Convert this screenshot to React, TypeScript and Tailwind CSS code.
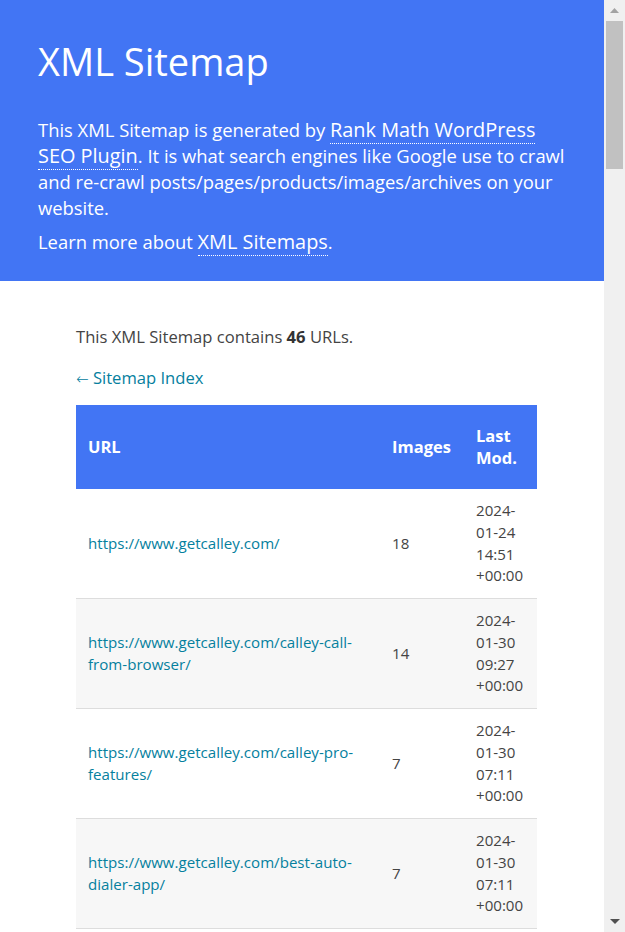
import React from 'react';

interface SitemapRow {
  loc: string;
  images: number;
  lastmod: string;
}

const rows: SitemapRow[] = [
  { loc: 'https://www.getcalley.com/', images: 18, lastmod: '2024-01-24 14:51 +00:00' },
  { loc: 'https://www.getcalley.com/calley-call-from-browser/', images: 14, lastmod: '2024-01-30 09:27 +00:00' },
  { loc: 'https://www.getcalley.com/calley-pro-features/', images: 7, lastmod: '2024-01-30 07:11 +00:00' },
  { loc: 'https://www.getcalley.com/best-auto-dialer-app/', images: 7, lastmod: '2024-01-30 07:11 +00:00' },
  { loc: 'https://www.getcalley.com/power-dialer/', images: 9, lastmod: '2024-01-30 07:11 +00:00' },
];

function Scrollbar() {
  return (
    <aside className="flex w-[21px] shrink-0 flex-col items-center bg-[#f0f0f0]">
      <div className="flex h-[21px] w-full items-center justify-center">
        <svg width="9" height="5" viewBox="0 0 9 5">
          <path d="M4.5 0L9 5H0z" fill="#a3a3a3" />
        </svg>
      </div>
      <div className="h-[148px] w-[17px] bg-[#c1c1c1]" />
      <div className="flex-1" />
      <div className="flex h-[21px] w-full items-center justify-center">
        <svg width="10" height="5" viewBox="0 0 10 5">
          <path d="M0 0H10L5 5z" fill="#505050" />
        </svg>
      </div>
    </aside>
  );
}

export default function App() {
  return (
    <div className="flex h-[932px] w-[625px] overflow-hidden bg-white font-['Open_Sans',sans-serif] text-[#444]">
      <main className="w-[604px] shrink-0 overflow-hidden">
        {/* description */}
        <header className="bg-[#4275f4] pt-[36px] pb-[26px] pl-[38px] pr-[33px] text-white">
          <h1 className="mb-[31px] text-[38px] font-normal leading-[50px]">XML Sitemap</h1>
          <p className="text-[18.4px] leading-[26px]">
            This XML Sitemap is generated by{' '}
            <a href="#" className="border-b border-dotted border-white text-[19.9px] leading-[26px] text-white">
              Rank Math WordPress SEO Plugin
            </a>
            . It is what search engines like Google use to crawl and re-crawl posts/pages/products/images/archives on
            your website.
          </p>
          <p className="mt-[8px] text-[18.4px] leading-[26px]">
            Learn more about{' '}
            <a href="#" className="border-b border-dotted border-white text-[19.9px] leading-[26px] text-white">
              XML Sitemaps
            </a>
            .
          </p>
        </header>

        {/* content */}
        <section className="pt-[45px] pl-[76px]">
          <p className="text-[16.6px] leading-[22px]">
            This XML Sitemap contains <strong className="font-bold text-[#333]">46</strong> URLs.
          </p>
          <p className="mt-[19px] text-[16.6px] leading-[22px]">
            <a href="#" className="text-[#05809e]">
              <span className="font-['DejaVu_Sans',sans-serif] text-[15px] font-light">←</span> Sitemap Index
            </a>
          </p>

          <table className="mt-[15px] w-[461px] table-fixed border-collapse">
            <colgroup>
              <col className="w-[304px]" />
              <col className="w-[84px]" />
              <col className="w-[73px]" />
            </colgroup>
            <thead>
              <tr className="bg-[#4275f4] text-left text-[16.5px] font-bold leading-[22px] text-white">
                <th className="px-[12px] py-[20px] align-middle">URL</th>
                <th className="px-[12px] py-[20px] align-middle">Images</th>
                <th className="px-[12px] py-[20px] align-middle">Last Mod.</th>
              </tr>
            </thead>
            <tbody>
              {rows.map((row, i) => (
                <tr key={row.loc} className={i % 2 === 1 ? 'bg-[#f7f7f7]' : 'bg-white'}>
                  <td className="border-b border-[#ddd] px-[12px] py-[11px] align-middle text-[15.1px] leading-[21.75px]">
                    <a href="#" className="text-[#05809e]">
                      {row.loc}
                    </a>
                  </td>
                  <td className="border-b border-[#ddd] px-[12px] py-[11px] align-middle text-[15.1px] leading-[21.75px]">
                    {row.images}
                  </td>
                  <td className="border-b border-[#ddd] px-[12px] py-[11px] align-middle text-[15.1px] leading-[21.75px]">
                    {row.lastmod}
                  </td>
                </tr>
              ))}
            </tbody>
          </table>
        </section>
      </main>
      <Scrollbar />
    </div>
  );
}
